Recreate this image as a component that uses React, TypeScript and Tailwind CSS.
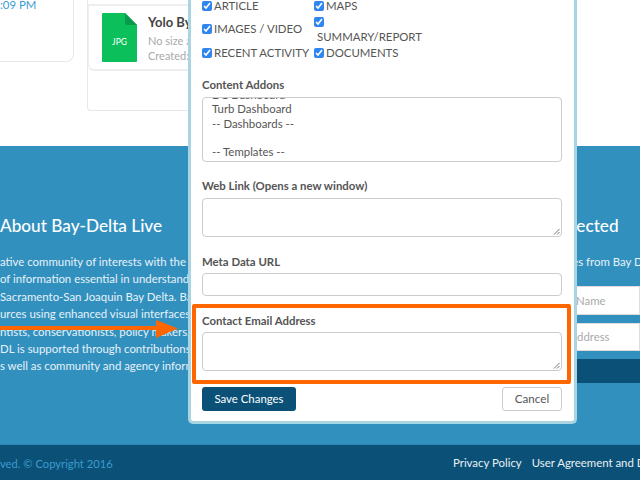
import React from 'react';

const FONT = 'font-["Lato","Noto_Sans",sans-serif]';

const aboutLines = [
  'ative community of interests with the goal of',
  'of information essential in understanding the',
  'Sacramento-San Joaquin Bay Delta. Bay-Delta',
  'urces using enhanced visual interfaces and',
  'ntists, conservationists, policy makers, and',
  'DL is supported through contributions from',
  's well as community and agency information',
];

function Check({ label }: { label: string }) {
  return (
    <label className="flex items-center gap-[2px] h-[23px] text-[11.4px] text-[#555] whitespace-nowrap">
      <input type="checkbox" checked readOnly className="w-[10px] h-[10px] m-0 accent-[#2f86f0]" />
      {label}
    </label>
  );
}

function FieldLabel({ children }: { children: React.ReactNode }) {
  return <div className="text-[11.4px] font-bold text-[#555] leading-[16px]">{children}</div>;
}

function Box({ className }: { className: string }) {
  return <div className={`border border-[#ccc] rounded-[4px] bg-white ${className}`} />;
}

function Resize() {
  return (
    <svg width="7" height="7" viewBox="0 0 7 7" className="absolute right-[2px] bottom-[2px]">
      <path d="M1 6.5 L6.5 1 M4 6.5 L6.5 4" stroke="#777" strokeWidth="1" fill="none" />
    </svg>
  );
}

function Modal() {
  return (
    <div className="absolute left-[188px] top-0 w-[389px] h-[424px] bg-white border-x-[3px] border-b-[3px] border-[#a9d4e2] rounded-b-[5px] pl-[11px] pr-[12px] flex flex-col">
      <div className="grid grid-cols-[112px_1fr] mt-[-6px]">
        <Check label="ARTICLE" />
        <Check label="MAPS" />
        <Check label="IMAGES / VIDEO" />
        <div className="h-[24px] text-[11.4px] text-[#555] leading-[15px] flex flex-col">
          <input type="checkbox" checked readOnly className="w-[10px] h-[10px] mt-[0px] accent-[#2f86f0] shrink-0" />
          <span className="mt-[2px] ml-[3px] whitespace-nowrap">SUMMARY/REPORT</span>
        </div>
        <Check label="RECENT ACTIVITY" />
        <Check label="DOCUMENTS" />
      </div>

      <div className="mt-[13px]">
        <FieldLabel>Content Addons</FieldLabel>
      </div>
      <div className="mt-[4px] h-[65px] border border-[#ccc] rounded-[4px] overflow-hidden pl-[9px] text-[11.4px] leading-[14.3px] text-[#555]">
        <div className="-mt-[10px]">DC Dashboard</div>
        <div>Turb Dashboard</div>
        <div>-- Dashboards --</div>
        <div className="h-[14px]" />
        <div>-- Templates --</div>
      </div>

      <div className="mt-[16px]">
        <FieldLabel>Web Link (Opens a new window)</FieldLabel>
      </div>
      <div className="relative mt-[4px]">
        <Box className="h-[39px]" />
        <Resize />
      </div>

      <div className="mt-[17px]">
        <FieldLabel>Meta Data URL</FieldLabel>
      </div>
      <Box className="mt-[3px] h-[23px]" />

      <div className="mt-[8px] -ml-[10px] -mr-[9px] h-[80px] border-[4px] border-[#ff6600] rounded-[2px] pl-[6px] pr-[5px] pt-[5px]">
        <FieldLabel>Contact Email Address</FieldLabel>
        <div className="relative mt-[3px]">
          <Box className="h-[39px]" />
          <Resize />
        </div>
      </div>

      <div className="flex justify-between items-center mt-[3px]">
        <button className="w-[94px] h-[24px] bg-[#0b5177] rounded-[3px] text-white text-[11.4px]">Save Changes</button>
        <button className="w-[60px] h-[24px] bg-white border border-[#ccc] rounded-[3px] text-[#555] text-[11.6px]">Cancel</button>
      </div>
    </div>
  );
}

function TopCards() {
  return (
    <div className="h-[146px] bg-white flex items-start gap-[13px]">
      <div className="w-[74px] h-[62px] border-r border-b border-[#e8e8e8] rounded-br-[8px] text-[11.4px] text-[#3a9bd0] leading-[10px] whitespace-nowrap overflow-hidden">
        :09 PM
      </div>
      <div className="w-[110px] h-[111px] border-l border-b border-[#e8e8e8] rounded-bl-[4px] pt-[4px] overflow-hidden">
        <div className="h-[67px] border-t-[2px] border-b-[2px] border-l border-[#eeeeee] rounded-bl-[6px] flex items-start pl-[13px] pt-[7px] gap-[11px]">
          <svg width="35" height="49" viewBox="0 0 35 49" className="shrink-0">
            <path d="M1 0 H23 L35 12 V48 a1 1 0 0 1 -1 1 H1 a1 1 0 0 1 -1 -1 V1 a1 1 0 0 1 1 -1 Z" fill="#0bbf5b" />
            <path d="M23 0 L35 12 H25 a2 2 0 0 1 -2 -2 Z" fill="#0a9a4b" />
            <text x="17.5" y="32" textAnchor="middle" fontSize="8.5" fill="#fff" fontFamily="Lato, sans-serif">JPG</text>
          </svg>
          <div className="whitespace-nowrap text-[11px] leading-[15px] text-[#aaa]">
            <div className="text-[13px] font-bold text-[#444] leading-[16px] mt-[1px] mb-[3px]">Yolo By</div>
            <div>No size a</div>
            <div>Created:</div>
          </div>
        </div>
      </div>
    </div>
  );
}

function BlueSection() {
  return (
    <div className="h-[298px] bg-[#3290bf] flex text-white">
      <div className="w-[240px] shrink-0 overflow-hidden pt-[69px]">
        <div className="text-[17.2px] font-medium leading-[22px] whitespace-nowrap">About Bay-Delta Live</div>
        <div className="mt-[16px] text-[11.4px] leading-[17.4px] whitespace-nowrap text-[#e6f2f8]">
          {aboutLines.map((line) => (
            <div key={line}>{line}</div>
          ))}
        </div>
      </div>
      <div className="ml-auto w-[136px] shrink-0 overflow-hidden pt-[69px] whitespace-nowrap">
        <div className="text-[17.2px] font-medium leading-[22px]">Get Connected</div>
        <div className="mt-[16px] ml-[6px] text-[11.4px] leading-[17px] text-[#e6f2f8]">Latest updates from Bay Delta</div>
      </div>
    </div>
  );
}

export default function App() {
  return (
    <div className={`relative w-[640px] h-[480px] overflow-hidden ${FONT}`}>
      <TopCards />
      <BlueSection />
      <div className="h-[36px] bg-[#0b5177] flex items-center justify-between whitespace-nowrap text-[11.4px] border-t border-[#2f86b2]">
        <span className="text-[#3a9bd0] text-[11.2px] mt-[4px]">ved. © Copyright 2016</span>
        <div className="w-[187px] overflow-hidden flex gap-[10px] text-[#e8f0f4]">
          <span>Privacy Policy</span>
          <span>User Agreement and Disclaimer</span>
        </div>
      </div>

      {/* signup fields running off the right edge */}
      <div className="absolute left-[560px] top-[286px] w-[80px] flex flex-col text-[11.4px] text-[#aaa]">
        <div className="h-[29px] bg-white border border-[#ddd] pl-[15px] flex items-center">Name</div>
        <div className="mt-[8px] h-[28px] bg-white border border-[#ddd] pl-[16px] flex items-center whitespace-nowrap overflow-hidden">ddress</div>
        <div className="mt-[8px] h-[24px] bg-[#0b5177]" />
      </div>

      <Modal />

      {/* annotation arrow */}
      <svg width="180" height="20" viewBox="0 0 180 20" className="absolute left-0 top-[319px]">
        <rect x="0" y="7" width="160" height="4" fill="#ff6600" />
        <path d="M156 1 L178 9.5 L156 19 Z" fill="#ff6600" />
      </svg>
    </div>
  );
}
